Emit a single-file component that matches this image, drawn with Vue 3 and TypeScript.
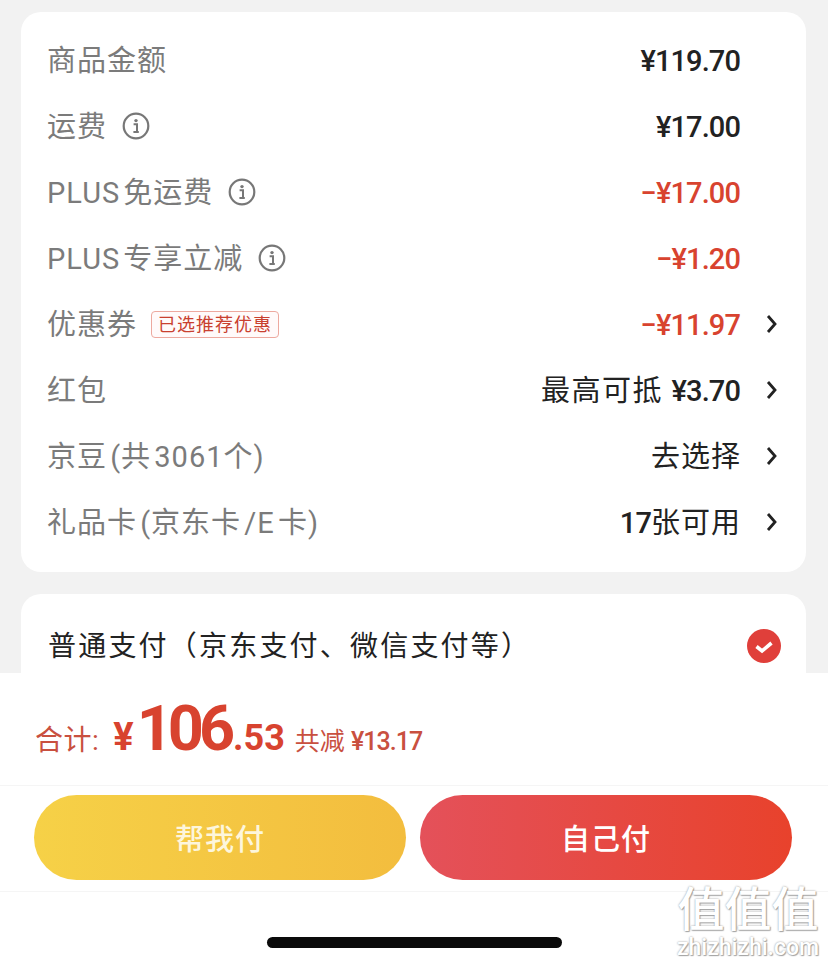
<template>
  <div class="page">
    <div class="main">
      <section class="card fee-card">
        <div v-for="row in rows" :key="row.label" class="row">
          <div class="row-left">
            <span class="label">{{ row.label }}</span>
            <svg v-if="row.info" class="info" viewBox="0 0 28 28">
              <circle cx="14" cy="14" r="12.3" fill="none" stroke="#777" stroke-width="2.2" />
              <circle cx="14" cy="8.6" r="1.7" fill="#777" />
              <path d="M11.6 12.2h3.4v7.6M11.4 20h5.4" fill="none" stroke="#777" stroke-width="2" />
            </svg>
            <span v-if="row.tag" class="tag">{{ row.tag }}</span>
          </div>
          <div class="row-right">
            <span class="value" :class="{ red: row.red }">
              <span v-if="row.prefix" class="prefix" :class="{ tail: !row.value }">{{ row.prefix }}</span>{{ row.value }}<span v-if="row.suffix" class="prefix tail">{{ row.suffix }}</span>
            </span>
            <span class="arrow-slot">
              <svg v-if="row.arrow" class="arrow" viewBox="0 0 12 20">
                <path d="M2 2l7 8-7 8" fill="none" stroke="#222" stroke-width="2.8" />
              </svg>
            </span>
          </div>
        </div>
      </section>

      <section class="card pay-card">
        <span class="pay-label">普通支付（京东支付、微信支付等）</span>
        <svg class="check" viewBox="0 0 34 34">
          <circle cx="17" cy="17" r="17" fill="#e03f3a" />
          <path d="M9.5 17.5l5.5 4.5 9.5-8" fill="none" stroke="#fff" stroke-width="3.6" />
        </svg>
      </section>
    </div>

    <footer class="footer">
      <div class="total">
        <span class="total-label">合计:</span>
        <span class="yen">¥</span>
        <span class="big">106</span>
        <span class="cents">.53</span>
        <span class="saved">共减 <b>¥13.17</b></span>
      </div>
      <div class="actions">
        <button class="btn btn-help">帮我付</button>
        <button class="btn btn-self">自己付</button>
      </div>
      <div class="home-bar"><i></i></div>
    </footer>

    <div class="watermark">
      <div class="wm-mark">值值值</div>
      <div class="wm-url">zhizhizhi.com</div>
    </div>
  </div>
</template>

<script setup lang="ts">
interface FeeRow {
  label: string
  value: string
  prefix?: string
  suffix?: string
  info?: boolean
  tag?: string
  red?: boolean
  arrow?: boolean
}

const rows: FeeRow[] = [
  { label: '商品金额', value: '¥119.70' },
  { label: '运费', value: '¥17.00', info: true },
  { label: 'PLUS 免运费', value: '−¥17.00', info: true, red: true },
  { label: 'PLUS 专享立减', value: '−¥1.20', info: true, red: true },
  { label: '优惠券', value: '−¥11.97', tag: '已选推荐优惠', red: true, arrow: true },
  { label: '红包', value: '¥3.70', prefix: '最高可抵 ', arrow: true },
  { label: '京豆 (共 3061个)', value: '', prefix: '去选择', arrow: true },
  { label: '礼品卡 (京东卡 /E 卡)', value: '17', suffix: '张可用', arrow: true },
]
</script>

<style>
body {
  background: #f2f2f2;
}
</style>

<style scoped>
.page {
  position: relative;
  display: flex;
  flex-direction: column;
  width: 828px;
  height: 966px;
  overflow: hidden;
  background: #f2f2f2;
  font-family: "Roboto", "Noto Sans CJK SC", sans-serif;
}
.main {
  height: 673px;
  flex: none;
  overflow: hidden;
  padding: 12px 22px 0 21px;
  box-sizing: border-box;
}
.card {
  background: #fff;
  border-radius: 20px;
}
.fee-card {
  padding: 15px 28px 17px 26px;
}
.row {
  display: flex;
  justify-content: space-between;
  align-items: center;
  height: 66px;
}
.row-left {
  display: flex;
  align-items: center;
}
.label {
  color: #7b7b7b;
  font-size: 29px;
  line-height: 40px;
  letter-spacing: 1px;
  word-spacing: -5px;
  white-space: pre;
  margin-top: 1px;
}
.info {
  width: 28px;
  height: 28px;
  margin-left: 15px;
}
.tag {
  margin-left: 14px;
  padding: 0 6px;
  height: 27px;
  line-height: 25px;
  box-sizing: border-box;
  border: 1px solid #eda99f;
  border-radius: 4px;
  color: #c9402f;
  font-size: 18px;
  letter-spacing: 1px;
  background: #fffafa;
}
.row-right {
  display: flex;
  align-items: center;
}
.value {
  color: #222;
  font-size: 29px;
  line-height: 40px;
  font-weight: 500;
  letter-spacing: -0.9px;
  white-space: pre;
  margin-top: 2px;
}
.prefix {
  font-weight: 400;
  letter-spacing: 1.5px;
}
.tail {
  letter-spacing: 1px;
  margin-right: -1px;
}
.red {
  color: #d8432f;
}
.arrow-slot {
  display: flex;
  width: 12px;
  height: 20px;
  margin-left: 26px;
}
.arrow {
  width: 12px;
  height: 20px;
}
.pay-card {
  display: flex;
  justify-content: space-between;
  align-items: center;
  height: 104px;
  margin-top: 22px;
  padding: 0 25px 0 27px;
  border-radius: 20px 20px 0 0;
}
.pay-label {
  color: #222;
  font-size: 28px;
  line-height: 40px;
  letter-spacing: 2.2px;
  margin-top: 2px;
}
.check {
  width: 34px;
  height: 34px;
}
.footer {
  flex: 1;
  background: #fff;
  display: flex;
  flex-direction: column;
}
.total {
  display: flex;
  align-items: baseline;
  height: 113px;
  box-sizing: border-box;
  padding: 0 0 0 35px;
  color: #d8432f;
  border-bottom: 1px solid #f5f5f5;
  line-height: 112px;
}
.total-label {
  font-size: 28px;
  color: #c9503f;
  letter-spacing: 0.5px;
}
.yen {
  font-size: 38px;
  font-weight: 700;
  margin-left: 14px;
}
.big {
  font-size: 63px;
  font-weight: 700;
  letter-spacing: -5px;
  margin-left: 3px;
}
.cents {
  font-size: 36px;
  font-weight: 700;
  margin-left: 3px;
}
.saved {
  font-size: 25px;
  margin-left: 10px;
  color: #c9503f;
}
.saved b {
  font-weight: 500;
  letter-spacing: -1px;
}
.actions {
  display: flex;
  gap: 14px;
  padding: 9px 36px 11px 34px;
  border-bottom: 1px solid #f5f5f5;
}
.btn {
  flex: 1;
  height: 85px;
  padding-bottom: 3px;
  border: none;
  border-radius: 43px;
  color: #fff;
  font-family: inherit;
  font-size: 29px;
  font-weight: 500;
  letter-spacing: 1px;
}
.btn-help {
  background: linear-gradient(90deg, #f6d147, #f3bd3e);
  color: #fdf6dc;
}
.btn-self {
  background: linear-gradient(90deg, #e4515a, #e8422c);
}
.home-bar {
  display: flex;
  justify-content: center;
  padding-top: 45px;
}
.home-bar i {
  display: block;
  width: 295px;
  height: 11px;
  border-radius: 6px;
  background: #0a0a0a;
}
.watermark {
  position: absolute;
  right: 8px;
  bottom: 8px;
  width: 144px;
  text-align: center;
  color: #fff;
  text-shadow: 0 0 2px #8f8f8f, 1px 1px 1px #aaa;
}
.wm-mark {
  font-size: 47px;
  line-height: 44px;
  font-weight: 500;
}
.wm-url {
  margin-top: 5px;
  font-size: 23px;
  line-height: 21px;
  font-weight: 500;
}
</style>
